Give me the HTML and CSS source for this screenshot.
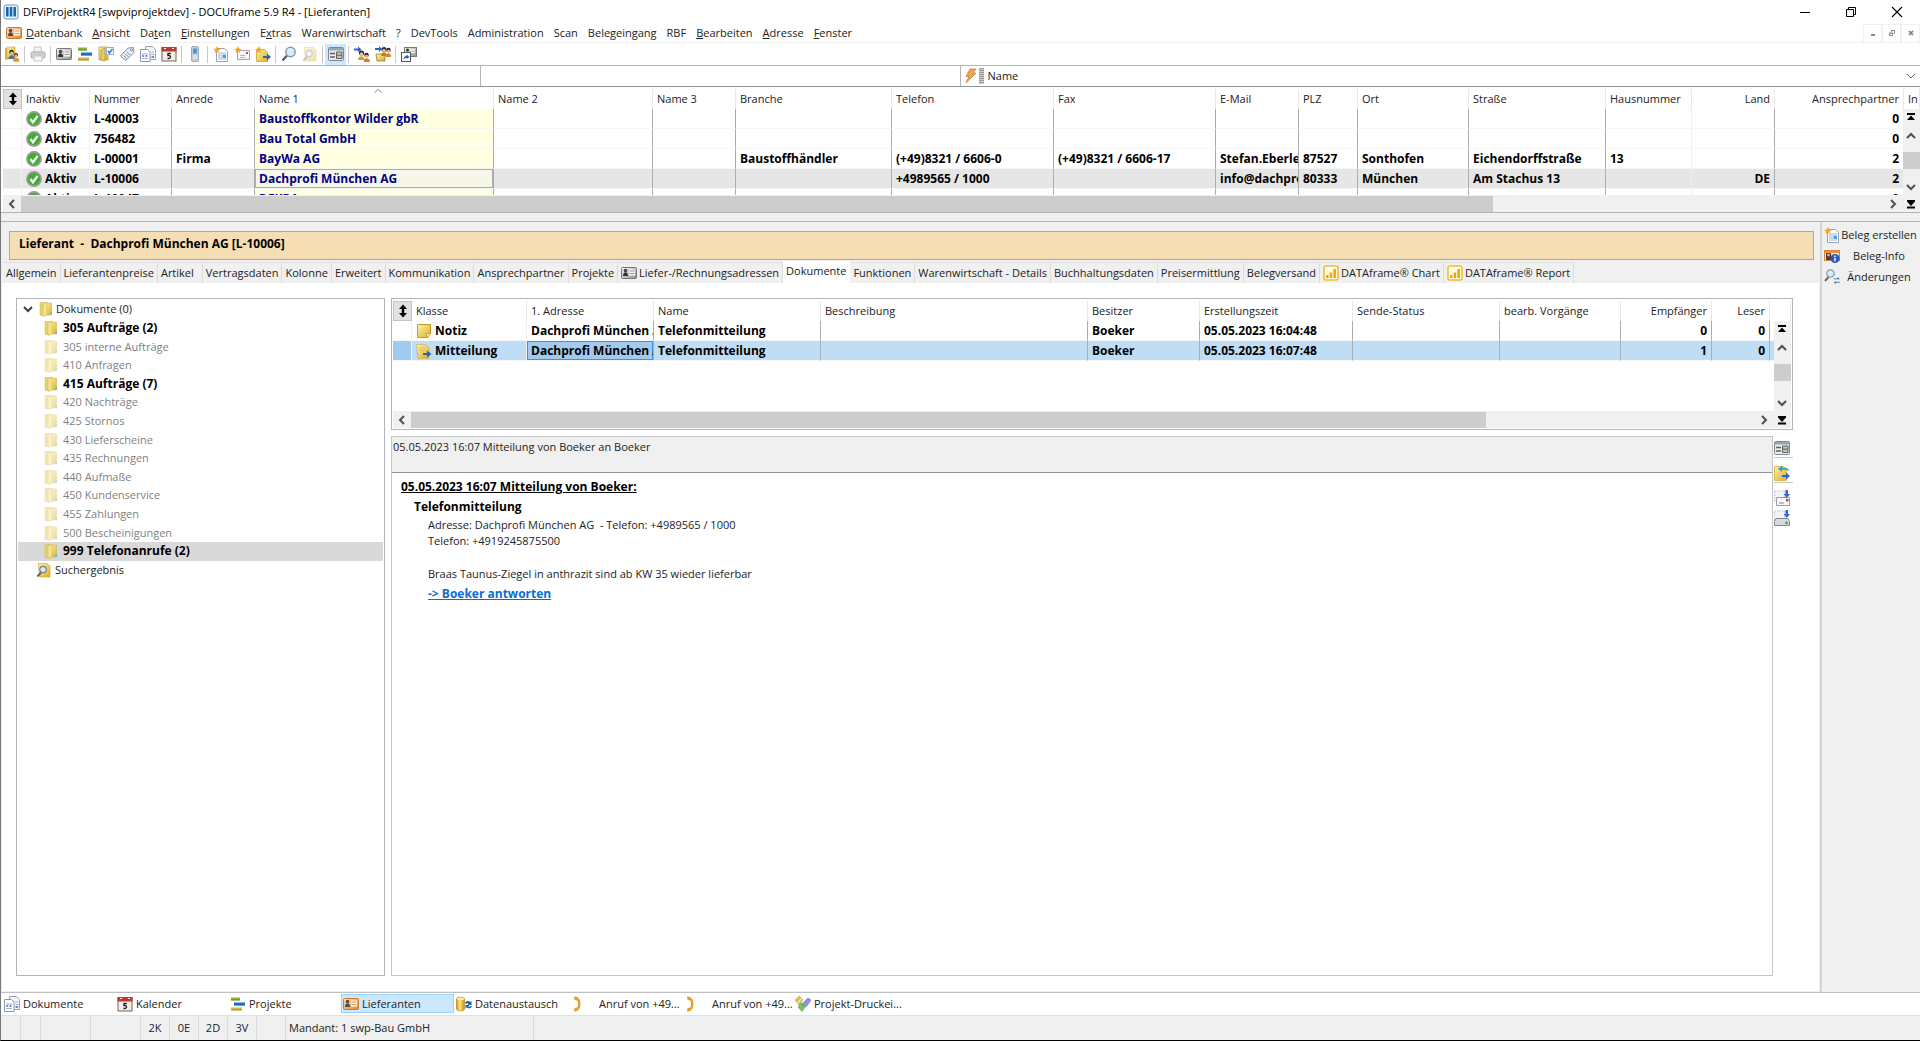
FILE: index.html
```html
<!DOCTYPE html>
<html lang="de">

<head>
    <meta charset="UTF-8">
    <title>DFViProjektR4 [swpviprojektdev] - DOCUframe 5.9 R4 - [Lieferanten]</title>
    <link rel="stylesheet" href="styles.css">
</head>

<body>

    <!-- Icon set -->
    <svg class="sprite" aria-hidden="true">
        <defs>
            <linearGradient id="g-gold" x1="0" y1="0" x2="1" y2="1">
                <stop offset="0" stop-color="#fdf3a8" />
                <stop offset="1" stop-color="#dcae28" />
            </linearGradient>
            <linearGradient id="g-gray" x1="0" y1="0" x2="1" y2="1">
                <stop offset="0" stop-color="#fafafa" />
                <stop offset="1" stop-color="#8e8e8e" />
            </linearGradient>
            <linearGradient id="g-orange" x1="0" y1="0" x2="1" y2="1">
                <stop offset="0" stop-color="#fde2bf" />
                <stop offset="1" stop-color="#e08528" />
            </linearGradient>
            <linearGradient id="g-tube" x1="0" y1="0" x2="1" y2="0">
                <stop offset="0" stop-color="#c98f10" />
                <stop offset=".4" stop-color="#ffe680" />
                <stop offset="1" stop-color="#c98f10" />
            </linearGradient>
        </defs>
        <symbol id="i-app" viewBox="0 0 16 16">
            <rect x="1" y="1" width="14" height="14" rx="2" fill="#e8f3fb" stroke="#5b9bd0" />
            <path d="M3 3h2.6v9.500H3zM6.700 3h2.600v9.500H6.700zM10.400 3H13v9.500h-2.600z" fill="#1b66ab" />
        </symbol>
        <symbol id="i-card" viewBox="0 0 16 16">
            <rect x=".5" y="2.500" width="15" height="11" rx="1" fill="url(#g-orange)" stroke="#cf7a2c" />
            <rect x="8" y="4.500" width="6" height="6" fill="#fff4e6" />
            <path d="M8.500 6h5M8.500 8.500h5" stroke="#d79b62" />
            <circle cx="4.500" cy="5.500" r="1.800" fill="#6a4a34" />
            <path d="M2 11c0-5 5-5 5 0z" fill="#4b4b52" />
        </symbol>
        <symbol id="i-card-gray" viewBox="0 0 16 16">
            <rect x=".5" y="2.500" width="15" height="11" rx="1" fill="url(#g-gray)" stroke="#777" />
            <rect x="8" y="4.500" width="6" height="6" fill="#f4f4f4" />
            <path d="M8.500 6h5M8.500 8.500h5" stroke="#999" />
            <circle cx="4.500" cy="5.500" r="1.800" fill="#444" />
            <path d="M2 11c0-5 5-5 5 0z" fill="#333" />
        </symbol>
        <symbol id="i-contacts" viewBox="0 0 16 16">
            <path d="M1 2l6-1v12l-6 1z" fill="#d9b93c" />
            <path d="M3 1h8v11H3z" fill="url(#g-gold)" stroke="#c9a63a" stroke-width=".6" />
            <circle cx="7.500" cy="6" r="2.300" fill="#3a2a20" />
            <circle cx="7.700" cy="7" r="1.600" fill="#eebd8c" />
            <path d="M4.500 13c0-5 6-5 6 0z" fill="#3d6fb5" />
            <circle cx="12" cy="9" r="2" fill="#2b211b" />
            <circle cx="12" cy="9.800" r="1.500" fill="#e8b17c" />
            <path d="M9 15.500c0-5 6.500-5 6.500 0z" fill="#e08a2c" />
        </symbol>
        <symbol id="i-printer" viewBox="0 0 16 16">
            <path d="M4 1h7l1 5H4z" fill="#f4f4f4" stroke="#c4c4c4" />
            <rect x="1" y="6" width="14" height="6" rx="1" fill="#cfcfcf" stroke="#b5b5b5" />
            <path d="M4 10h8v5H4z" fill="#f7f7f7" stroke="#c4c4c4" />
        </symbol>
        <symbol id="i-gantt" viewBox="0 0 16 16">
            <path d="M1 1.500h9v3H1z" fill="#86b92c" />
            <path d="M4 6.500h11v3H4z" fill="#1c78c8" />
            <path d="M1 11.500h11v3H1z" fill="#dfb445" />
            <path d="M1 4h9M4 9h11M1 14h11" stroke="#0004" />
        </symbol>
        <symbol id="i-catalog" viewBox="0 0 16 16">
            <path d="M1 1h9v13H1z" fill="url(#g-gold)" stroke="#b9952d" stroke-width=".7" />
            <path d="M3 4l4-2v13l-4-1z" fill="#e6cc68" stroke="#a8872b" stroke-width=".6" />
            <rect x="8.500" y="1.500" width="7" height="7" fill="#f5f9fd" stroke="#9fb2c4" />
            <path d="M10 5l1.500 2L14.500 3" fill="none" stroke="#2e7fc2" stroke-width="1.400" />
        </symbol>
        <symbol id="i-tag" viewBox="0 0 16 16">
            <path d="M1.500 10L9 2l5.500-.5.500 5L7 14.500z" fill="#e6edf2" stroke="#8397a6" />
            <circle cx="12.500" cy="4" r="1.100" fill="#fff" stroke="#6c8294" stroke-width=".8" />
            <path d="M4.500 9.500l3 3M6.200 7.700l3 3M8 6l3 3" stroke="#7d92a3" />
        </symbol>
        <symbol id="i-docs" viewBox="0 0 16 16">
            <path d="M5.500.5h7l3 3v10h-10z" fill="#f3f6f9" stroke="#98a4b0" />
            <path d="M.5 3.500h7l2.500 2.500v9.500H.5z" fill="#fff" stroke="#8d99a5" />
            <path d="M2 8h6M2 12.500h6M11.500 6H14M11.500 8.500H14" stroke="#9db5cf" />
            <path d="M2.200 10h2M5.500 10h2M11.500 11H14" stroke="#5b5bd0" stroke-width="1.500" />
        </symbol>
        <symbol id="i-calendar" viewBox="0 0 16 16">
            <rect x="1" y="1.500" width="14" height="13.500" fill="#f2ede8" stroke="#7b6152" />
            <path d="M.5 1h15v4.500H.5z" fill="#bf3a2e" />
            <path d="M3 2.500h2M11 2.500h2" stroke="#fff" />
            <path d="M9.800 7.500H7v2c2.800-.6 3.400 2.900.8 3H6.500" fill="none" stroke="#222" stroke-width="1.400" />
        </symbol>
        <symbol id="i-mobile" viewBox="0 0 16 16">
            <rect x="4.500" y=".5" width="7" height="15" rx="1.500" fill="#c9ced4" stroke="#a2a9b1" />
            <path d="M6 2.500h4v5H6z" fill="#3f9ae0" />
            <path d="M6 10h4M6 12h4" stroke="#f5f5f5" />
        </symbol>
        <symbol id="i-new-doc" viewBox="0 0 16 16">
            <path d="M3.500 2.500h8l3 3v10h-11z" fill="#fff" stroke="#98a4b0" />
            <path d="M5 7h8M5 9h4M5 11h4M5 13h8" stroke="#9db5cf" />
            <path d="M9.500 8.500H13V12H9.500z" fill="#4fa0d8" />
            <path d="M4 0l1 2.500L7.500 3 5.500 4.500 6 7 4 5.700 1.500 7l.7-2.600L0 3l2.800-.4z" fill="#f5a623" />
        </symbol>
        <symbol id="i-new-mail" viewBox="0 0 16 16">
            <path d="M3.500 4.500h12v9h-12z" fill="#f7f7f7" stroke="#a5a5a5" />
            <path d="M6 9.500h5M6 11.500h5" stroke="#b5b5b5" />
            <path d="M12 6h2v2h-2z" fill="#d6403a" />
            <path d="M4 0l1 2.500L7.500 3 5.500 4.500 6 7 4 5.700 1.500 7l.7-2.600L0 3l2.800-.4z" fill="#f5a623" />
        </symbol>
        <symbol id="i-new-note" viewBox="0 0 16 16">
            <path d="M1.500 3.500h8l3 3v9h-11z" fill="url(#g-gold)" stroke="#d5b548" />
            <path d="M8 10h4V7.500l4 3.500-4 3.500V12H8z" fill="#2c62c4" />
            <path d="M4 0l1 2.500L7.500 3 5.500 4.500 6 7 4 5.700 1.500 7l.7-2.600L0 3l2.800-.4z" fill="#f5a623" />
        </symbol>
        <symbol id="i-search" viewBox="0 0 16 16">
            <path d="M1.500 14.500L6 9.500" stroke="#5d5d66" stroke-width="2.400" />
            <circle cx="9.500" cy="6" r="4.700" fill="#d5ebfa" stroke="#7d98ae" stroke-width="1.500" />
            <path d="M7 5c.5-1.500 2-2 3.500-1.500" stroke="#fff" fill="none" />
        </symbol>
        <symbol id="i-search-folder" viewBox="0 0 16 16">
            <path d="M2 1.500h9l3 2.500v11H4z" fill="url(#g-gold)" stroke="#d9a83c" stroke-width=".7" />
            <path d="M1.500 14.500L5 10.500" stroke="#666" stroke-width="2" />
            <circle cx="7" cy="7.500" r="3.200" fill="#dfe9f0" stroke="#72808c" stroke-width="1.200" />
        </symbol>
        <symbol id="i-form" viewBox="0 0 16 16">
            <rect x=".5" y="1.500" width="15" height="13" rx="1" fill="#e9ebed" stroke="#7e8890" />
            <path d="M1 2h14v2.500H1z" fill="#9aa6b0" />
            <path d="M2 7.500h5M2 11h5" stroke="#5b6268" stroke-width="1.500" />
            <path d="M8.500 6h5.500v6.500H8.500z" fill="#c9c69a" stroke="#5b6268" />
            <path d="M8.500 9.200H14" stroke="#5b6268" />
        </symbol>
        <symbol id="i-people-to" viewBox="0 0 16 16">
            <path d="M0 2.500h4V.5L7.500 3.500 4 6.500V4.500H0z" fill="#2c62c4" />
            <circle cx="7.500" cy="7" r="2.500" fill="#2b211b" />
            <circle cx="7.500" cy="8" r="1.700" fill="#eebd8c" />
            <path d="M4 14c0-5 6.500-5 6.500 0z" fill="#caa431" />
            <circle cx="12.500" cy="9" r="2.300" fill="#2b211b" />
            <circle cx="12.500" cy="10" r="1.600" fill="#e8b17c" />
            <path d="M9.500 16c0-5 6.500-5 6.500 0z" fill="#dd7b30" />
        </symbol>
        <symbol id="i-people-folder" viewBox="0 0 16 16">
            <path d="M1 8h6l3 2v5H2z" fill="url(#g-gold)" stroke="#8a7420" stroke-width=".7" />
            <path d="M0 2h4V0l3 3-3 3V4H0z" fill="#2c62c4" />
            <circle cx="9" cy="3.500" r="2.500" fill="#2b211b" />
            <circle cx="9" cy="4.500" r="1.700" fill="#eebd8c" />
            <path d="M6 10c0-5 6-5 6 0z" fill="#b7852b" />
            <circle cx="13.500" cy="4" r="2.200" fill="#2b211b" />
            <circle cx="13.500" cy="5" r="1.500" fill="#e8b17c" />
            <path d="M11 11c0-5 5-5 5 0z" fill="#dd7b30" />
        </symbol>
        <symbol id="i-shortcut" viewBox="0 0 16 16">
            <rect x="3.500" y="1.500" width="12" height="9" fill="url(#g-gray)" stroke="#777" />
            <path d="M9 4h5M9 6.500h5" stroke="#fff" />
            <circle cx="6.500" cy="4" r="1.500" fill="#333" />
            <rect x=".5" y="6.500" width="9" height="9" fill="#fff" stroke="#555" />
            <path d="M2.500 14c0-3 1-4 3-4V8.500L8.500 11 5.500 13v-1.500c-1.500 0-2 1-3 2.500z" fill="#1d56b0" />
        </symbol>
        <symbol id="i-bolt" viewBox="0 0 16 16">
            <path d="M7 1h6l-3 4h3L3 15l3-6.500H3z" fill="#f0a552" stroke="#b9793a" stroke-width=".7" />
        </symbol>
        <symbol id="i-ok" viewBox="0 0 16 16">
            <circle cx="8" cy="8" r="7" fill="#3fae2f" stroke="#999" stroke-width="1.800" />
            <path d="M4.500 8l2.500 3.300L11.500 5" fill="none" stroke="#fff" stroke-width="2.200" />
        </symbol>
        <symbol id="i-folder" viewBox="0 0 16 16">
            <path d="M2 1.500h6V14l-6 .5z" fill="#e9d36b" stroke="#cdb24a" stroke-width=".5" />
            <path d="M7.500 2h6v12h-6z" fill="url(#g-gold)" stroke="#cdb24a" stroke-width=".5" />
            <path d="M5 3l4-2v13l-4 1.500z" fill="#f5e590" stroke="#c9ac3f" stroke-width=".5" />
            <path d="M12.500 11h1.500v3h-1.500z" fill="#7db4c8" />
        </symbol>
        <symbol id="i-note" viewBox="0 0 16 16">
            <path d="M1.500 1.500h13v9l-3 4h-10z" fill="url(#g-gold)" stroke="#c39a2a" />
            <path d="M14.500 10.500h-4l1 4z" fill="#fff5bd" stroke="#b08a25" stroke-width=".6" />
        </symbol>
        <symbol id="i-message" viewBox="0 0 16 16">
            <path d="M.5 1.500H10l3 3v11H2z" fill="url(#g-gold)" stroke="#ceb455" stroke-width=".8" />
            <path d="M3 5h6M3 7.500h6" stroke="#d9c067" />
            <path d="M7 10h4V7.500l4.500 3.500L11 14.500V12H7z" fill="#2c62c4" />
        </symbol>
        <symbol id="i-chart" viewBox="0 0 16 16">
            <rect x="1" y="1" width="14" height="14" rx="2" fill="#fffbe8" stroke="#f0c030" stroke-width="1.600" />
            <path d="M3 10h2.500v3H3zM6.700 7.500h2.500V13H6.700zM10.400 4h2.500v9h-2.500z" fill="#e9a800" />
        </symbol>
        <symbol id="i-sync" viewBox="0 0 16 16">
            <path d="M.5 3c0-2.500 8-2.500 8 0v10c0 2.500-8 2.500-8 0z" fill="url(#g-tube)" stroke="#b07f12" stroke-width=".6" />
            <ellipse cx="4.500" cy="3" rx="3.500" ry="1.300" fill="#fff0a8" />
            <path d="M9 7c1-2.500 4-2.500 5-1l1.500-1v4h-4l1.200-1.200C12 7 10.500 7 10 8zM16 10c-1 2.800-4 2.800-5.200 1.300L9.500 12.500V9h4l-1.400 1.200c.9.800 1.900.8 2.400-.2z" fill="#1f5cae" />
        </symbol>
        <symbol id="i-call" viewBox="0 0 16 16">
            <path d="M6.500 2c5 1 5 11 0 12" fill="none" stroke="#e3a02d" stroke-width="2.400" />
            <path d="M5 .5l3.500.5v3.500L5.500 4zM5 15.500l3.500-.5v-3.500l-3 .5z" fill="#e3a02d" />
        </symbol>
        <symbol id="i-stamps" viewBox="0 0 16 16">
            <path d="M0 4l4-4 4 4-4 5z" fill="#d6c65a" stroke="#a5963b" stroke-width=".5" />
            <path d="M7 8l6-6 3 2-5 7z" fill="#8a94ea" stroke="#4d57b4" stroke-width=".5" />
            <path d="M3 11l3-4 4 4-3 4.500z" fill="#7fc25e" stroke="#4c8a35" stroke-width=".5" />
            <path d="M3 7l3-4" stroke="#fff" />
        </symbol>
        <symbol id="i-info" viewBox="0 0 16 16">
            <rect x=".5" y="2.500" width="15" height="10" fill="#f6e6d4" stroke="#d8823a" />
            <path d="M1 3h14v2H1z" fill="#e9923f" />
            <path d="M2 5h5v7H2z" fill="#4a3b35" />
            <circle cx="4.500" cy="7" r="1.400" fill="#d8b492" />
            <circle cx="11" cy="10.500" r="4.500" fill="#2b56c9" />
            <path d="M11 7.500v1.400M11 9.800v3.500" stroke="#fff" stroke-width="1.500" />
        </symbol>
        <symbol id="i-changes" viewBox="0 0 16 16">
            <path d="M1 12l3.500-4" stroke="#6d6d76" stroke-width="2" />
            <circle cx="6.500" cy="4.500" r="3.700" fill="#d5ebfa" stroke="#8199ac" stroke-width="1.200" />
            <path d="M9.500 9.500h4V8l2.500 2.300H9.500zM16 13.500h-4V15l-2.500-2.300H16z" fill="#33658f" />
        </symbol>
        <symbol id="i-reply" viewBox="0 0 16 16">
            <path d="M.5 1.500h9l3 3v11H.5z" fill="url(#g-gold)" stroke="#d9be56" />
            <path d="M4 4l4-3.500v2c4-.5 7 1 7.500 4-2-1.800-4-2-7.500-1.500v2z" fill="#35a3cf" />
            <path d="M8 10h4V7.500l4 3.500-4 3.500V12H8z" fill="#2c62c4" />
        </symbol>
        <symbol id="i-mail-down" viewBox="0 0 16 16">
            <path d="M.5 1h10v10H.5z" fill="#f2f4f6" stroke="#b9bfc5" stroke-dasharray="1.500 1" />
            <path d="M2.500 7.500h13v8h-13z" fill="#f7f7f7" stroke="#9d9d9d" />
            <path d="M5 13h5" stroke="#888" />
            <path d="M12 9h2.500v2.500H12z" fill="#d6403a" />
            <path d="M11.500 0h2.500v4h2l-3.200 4L9.500 4h2z" fill="#3568d4" />
        </symbol>
        <symbol id="i-drive-down" viewBox="0 0 16 16">
            <path d="M.5 1h10v10H.5z" fill="#f2f4f6" stroke="#b9bfc5" stroke-dasharray="1.500 1" />
            <path d="M2 8.500h12l1.500 3v4H.5v-4z" fill="#d7d9dc" stroke="#85898d" />
            <circle cx="12.500" cy="13" r="1.400" fill="#3fae2f" />
            <path d="M11.500 0h2.500v4h2l-3.200 4L9.500 4h2z" fill="#3568d4" />
        </symbol>
        <symbol id="i-fit" viewBox="0 0 16 16">
            <path d="M8 1.500l4 4.500H9.200v4H12l-4 4.500L4 10h2.800V6H4z" fill="#000" />
        </symbol>
        <symbol id="i-left" viewBox="0 0 16 16">
            <path d="M10 4L6 8l4 4" fill="none" stroke="#505050" stroke-width="2" />
        </symbol>
        <symbol id="i-right" viewBox="0 0 16 16">
            <path d="M6 4l4 4-4 4" fill="none" stroke="#505050" stroke-width="2" />
        </symbol>
        <symbol id="i-up" viewBox="0 0 16 16">
            <path d="M4 10l4-4 4 4" fill="none" stroke="#505050" stroke-width="2" />
        </symbol>
        <symbol id="i-down" viewBox="0 0 16 16">
            <path d="M4 6l4 4 4-4" fill="none" stroke="#505050" stroke-width="2" />
        </symbol>
        <symbol id="i-first" viewBox="0 0 16 16">
            <path d="M4 4h8v2H4zM8 6.500l4 4.500H4z" fill="#000" />
        </symbol>
        <symbol id="i-last" viewBox="0 0 16 16">
            <path d="M4 10.500h8v2H4zM8 10L4 5.500V4h8v1.500z" fill="#000" />
        </symbol>
        <symbol id="i-min" viewBox="0 0 16 16">
            <path d="M3 8.500h10" stroke="#000" />
        </symbol>
        <symbol id="i-restore" viewBox="0 0 16 16">
            <path d="M3.500 5.500h7v7h-7zM5.500 5.500v-2h7v7h-2" fill="none" stroke="#000" />
        </symbol>
        <symbol id="i-close" viewBox="0 0 16 16">
            <path d="M3 3l10 10M13 3L3 13" stroke="#000" stroke-width="1.200" />
        </symbol>
        <symbol id="i-mdi-min" viewBox="0 0 16 16">
            <path d="M6 10h4" stroke="#7d8fa3" stroke-width="2" />
        </symbol>
        <symbol id="i-mdi-restore" viewBox="0 0 16 16">
            <path d="M5.500 8.500h3v2h-3zM7.500 7V5.500h3v3H9.500M5 8h4M7 5.500h4" fill="none" stroke="#7d8fa3" />
        </symbol>
        <symbol id="i-mdi-close" viewBox="0 0 16 16">
            <path d="M6 6l4 4M10 6l-4 4" stroke="#6d7f93" stroke-width="1.700" />
        </symbol>
    </svg>

    <header class="title-bar">
        <svg class="icon"><use href="#i-app" /></svg>
        <h1>DFViProjektR4 [swpviprojektdev] - DOCUframe 5.9 R4 - [Lieferanten]</h1>
        <div class="window-buttons">
            <button aria-label="Minimieren"><svg class="icon"><use href="#i-min" /></svg></button>
            <button aria-label="Wiederherstellen"><svg class="icon"><use href="#i-restore" /></svg></button>
            <button aria-label="Schließen"><svg class="icon"><use href="#i-close" /></svg></button>
        </div>
    </header>

    <nav class="menu-bar">
        <svg class="icon"><use href="#i-card" /></svg>
        <button><u>D</u>atenbank</button>
        <button><u>A</u>nsicht</button>
        <button>Da<u>t</u>en</button>
        <button><u>E</u>instellungen</button>
        <button>E<u>x</u>tras</button>
        <button>Warenwirtschaft</button>
        <button>?</button>
        <button>DevTools</button>
        <button>Administration</button>
        <button>Scan</button>
        <button>Belegeingang</button>
        <button>RBF</button>
        <button><u>B</u>earbeiten</button>
        <button><u>A</u>dresse</button>
        <button><u>F</u>enster</button>
        <div class="mdi-buttons">
            <button aria-label="Fenster minimieren"><svg class="icon"><use href="#i-mdi-min" /></svg></button>
            <button aria-label="Fenster wiederherstellen"><svg class="icon"><use href="#i-mdi-restore" /></svg></button>
            <button aria-label="Fenster schließen"><svg class="icon"><use href="#i-mdi-close" /></svg></button>
        </div>
    </nav>

    <div class="toolbar">
        <button aria-label="Kontakte"><svg class="icon"><use href="#i-contacts" /></svg></button>
        <i class="sep"></i>
        <button aria-label="Drucken" disabled><svg class="icon"><use href="#i-printer" /></svg></button>
        <i class="sep"></i>
        <button aria-label="Adressen"><svg class="icon"><use href="#i-card-gray" /></svg></button>
        <button aria-label="Projekte"><svg class="icon"><use href="#i-gantt" /></svg></button>
        <button aria-label="Katalog"><svg class="icon"><use href="#i-catalog" /></svg></button>
        <button aria-label="Artikel"><svg class="icon"><use href="#i-tag" /></svg></button>
        <button aria-label="Dokumente"><svg class="icon"><use href="#i-docs" /></svg></button>
        <button aria-label="Kalender"><svg class="icon"><use href="#i-calendar" /></svg></button>
        <i class="sep"></i>
        <button aria-label="Telefon"><svg class="icon"><use href="#i-mobile" /></svg></button>
        <i class="sep"></i>
        <button aria-label="Neues Dokument"><svg class="icon"><use href="#i-new-doc" /></svg></button>
        <button aria-label="Neue E-Mail"><svg class="icon"><use href="#i-new-mail" /></svg></button>
        <button aria-label="Neue Mitteilung"><svg class="icon"><use href="#i-new-note" /></svg></button>
        <i class="sep"></i>
        <button aria-label="Suchen"><svg class="icon"><use href="#i-search" /></svg></button>
        <button aria-label="Suchergebnis" disabled><svg class="icon dim"><use href="#i-search-folder" /></svg></button>
        <i class="sep"></i>
        <button class="active" aria-label="Formularansicht"><svg class="icon"><use href="#i-form" /></svg></button>
        <i class="sep"></i>
        <button aria-label="Weiterleiten"><svg class="icon"><use href="#i-people-to" /></svg></button>
        <button aria-label="Zuordnen"><svg class="icon"><use href="#i-people-folder" /></svg></button>
        <i class="sep"></i>
        <button aria-label="Verknüpfung"><svg class="icon"><use href="#i-shortcut" /></svg></button>
    </div>

    <div class="filter-bar">
        <input type="text" aria-label="Filter">
        <input type="text" aria-label="Suchbegriff">
        <div class="sort-box">
            <svg class="icon"><use href="#i-bolt" /></svg>
            <span class="grip"></span>
            <select aria-label="Sortierung">
                <option>Name</option>
            </select>
            <svg class="arrow" viewBox="0 0 16 16"><path d="M4 6l4 4 4-4" /></svg>
        </div>
    </div>

    <section class="supplier-list">
        <div class="list-area">
            <table class="grid suppliers">
                <colgroup>
                    <col class="w-handle"><col class="w-inaktiv"><col class="w-nummer"><col class="w-short">
                    <col class="w-name1"><col class="w-name2"><col class="w-short"><col class="w-branche">
                    <col class="w-phone"><col class="w-phone"><col class="w-short"><col class="w-plz">
                    <col class="w-ort"><col class="w-strasse"><col class="w-haus"><col class="w-short">
                    <col class="w-partner"><col>
                </colgroup>
                <thead>
                    <tr>
                        <th class="fit"><button aria-label="Spalten anpassen"><svg class="icon"><use href="#i-fit" /></svg></button></th>
                        <th>Inaktiv</th>
                        <th>Nummer</th>
                        <th>Anrede</th>
                        <th class="sorted">Name 1<svg class="caret" viewBox="0 0 8 4"><path d="M.5 3.500L4 .5l3.500 3" /></svg></th>
                        <th>Name 2</th>
                        <th>Name 3</th>
                        <th>Branche</th>
                        <th>Telefon</th>
                        <th>Fax</th>
                        <th>E-Mail</th>
                        <th>PLZ</th>
                        <th>Ort</th>
                        <th>Straße</th>
                        <th>Hausnummer</th>
                        <th class="num">Land</th>
                        <th class="num">Ansprechpartner</th>
                        <th>In</th>
                    </tr>
                </thead>
                <tbody>
                    <tr>
                        <td></td>
                        <td class="soft"><svg class="icon"><use href="#i-ok" /></svg>Aktiv</td>
                        <td>L-40003</td>
                        <td></td>
                        <td class="name1">Baustoffkontor Wilder gbR</td>
                        <td></td><td></td><td></td><td></td><td></td><td></td><td></td><td></td><td></td>
                        <td class="soft"></td>
                        <td></td>
                        <td class="num">0</td>
                        <td></td>
                    </tr>
                    <tr>
                        <td></td>
                        <td class="soft"><svg class="icon"><use href="#i-ok" /></svg>Aktiv</td>
                        <td>756482</td>
                        <td></td>
                        <td class="name1">Bau Total GmbH</td>
                        <td></td><td></td><td></td><td></td><td></td><td></td><td></td><td></td><td></td>
                        <td class="soft"></td>
                        <td></td>
                        <td class="num">0</td>
                        <td></td>
                    </tr>
                    <tr>
                        <td></td>
                        <td class="soft"><svg class="icon"><use href="#i-ok" /></svg>Aktiv</td>
                        <td>L-00001</td>
                        <td>Firma</td>
                        <td class="name1">BayWa AG</td>
                        <td></td>
                        <td></td>
                        <td>Baustoffhändler</td>
                        <td>(+49)8321 / 6606-0</td>
                        <td>(+49)8321 / 6606-17</td>
                        <td>Stefan.Eberle</td>
                        <td>87527</td>
                        <td>Sonthofen</td>
                        <td>Eichendorffstraße</td>
                        <td class="soft">13</td>
                        <td></td>
                        <td class="num">2</td>
                        <td></td>
                    </tr>
                    <tr class="selected">
                        <td></td>
                        <td class="soft"><svg class="icon"><use href="#i-ok" /></svg>Aktiv</td>
                        <td>L-10006</td>
                        <td></td>
                        <td class="name1">Dachprofi München AG</td>
                        <td></td>
                        <td></td>
                        <td></td>
                        <td>+4989565 / 1000</td>
                        <td></td>
                        <td>info@dachpro</td>
                        <td>80333</td>
                        <td>München</td>
                        <td>Am Stachus 13</td>
                        <td class="soft"></td>
                        <td class="num">DE</td>
                        <td class="num">2</td>
                        <td></td>
                    </tr>
                    <tr>
                        <td></td>
                        <td class="soft"><svg class="icon"><use href="#i-ok" /></svg>Aktiv</td>
                        <td>L-10047</td>
                        <td></td>
                        <td class="name1">DEKRA</td>
                        <td></td><td></td><td></td><td></td><td></td><td></td><td></td><td></td><td></td>
                        <td class="soft"></td>
                        <td></td>
                        <td class="num">0</td>
                        <td></td>
                    </tr>
                </tbody>
            </table>
            <div class="v-scroll">
                <button aria-label="Zum Anfang"><svg class="icon"><use href="#i-first" /></svg></button>
                <button aria-label="Nach oben"><svg class="icon"><use href="#i-up" /></svg></button>
                <span class="thumb"></span>
                <button aria-label="Nach unten"><svg class="icon"><use href="#i-down" /></svg></button>
            </div>
        </div>
        <div class="h-scroll">
            <button aria-label="Nach links"><svg class="icon"><use href="#i-left" /></svg></button>
            <span class="track"><span class="thumb suppliers-thumb"></span></span>
            <button aria-label="Nach rechts"><svg class="icon"><use href="#i-right" /></svg></button>
            <button aria-label="Zum Ende"><svg class="icon"><use href="#i-last" /></svg></button>
        </div>
    </section>

    <div class="main">
        <main class="detail">
            <h2 class="banner">Lieferant&nbsp; -&nbsp; Dachprofi München AG [L-10006]</h2>

            <div class="tabs" role="tablist">
                <button role="tab">Allgemein</button>
                <button role="tab">Lieferantenpreise</button>
                <button role="tab" class="wide">Artikel</button>
                <button role="tab">Vertragsdaten</button>
                <button role="tab">Kolonne</button>
                <button role="tab">Erweitert</button>
                <button role="tab">Kommunikation</button>
                <button role="tab">Ansprechpartner</button>
                <button role="tab">Projekte</button>
                <button role="tab"><svg class="icon"><use href="#i-card-gray" /></svg>Liefer-/Rechnungsadressen</button>
                <button role="tab" class="active" aria-selected="true">Dokumente</button>
                <button role="tab">Funktionen</button>
                <button role="tab">Warenwirtschaft - Details</button>
                <button role="tab">Buchhaltungsdaten</button>
                <button role="tab">Preisermittlung</button>
                <button role="tab">Belegversand</button>
                <button role="tab"><svg class="icon"><use href="#i-chart" /></svg>DATAframe® Chart</button>
                <button role="tab"><svg class="icon"><use href="#i-chart" /></svg>DATAframe® Report</button>
            </div>

            <div class="tab-page">
                <ul class="tree">
                    <li class="root"><svg class="toggle" viewBox="0 0 16 16"><path d="M4 6l4 4 4-4" /></svg><svg class="icon"><use href="#i-folder" /></svg>Dokumente (0)</li>
                    <li class="filled"><svg class="icon"><use href="#i-folder" /></svg>305 Aufträge (2)</li>
                    <li class="empty"><svg class="icon"><use href="#i-folder" /></svg>305 interne Aufträge</li>
                    <li class="empty"><svg class="icon"><use href="#i-folder" /></svg>410 Anfragen</li>
                    <li class="filled"><svg class="icon"><use href="#i-folder" /></svg>415 Aufträge (7)</li>
                    <li class="empty"><svg class="icon"><use href="#i-folder" /></svg>420 Nachträge</li>
                    <li class="empty"><svg class="icon"><use href="#i-folder" /></svg>425 Stornos</li>
                    <li class="empty"><svg class="icon"><use href="#i-folder" /></svg>430 Lieferscheine</li>
                    <li class="empty"><svg class="icon"><use href="#i-folder" /></svg>435 Rechnungen</li>
                    <li class="empty"><svg class="icon"><use href="#i-folder" /></svg>440 Aufmaße</li>
                    <li class="empty"><svg class="icon"><use href="#i-folder" /></svg>450 Kundenservice</li>
                    <li class="empty"><svg class="icon"><use href="#i-folder" /></svg>455 Zahlungen</li>
                    <li class="empty"><svg class="icon"><use href="#i-folder" /></svg>500 Bescheinigungen</li>
                    <li class="filled selected"><svg class="icon"><use href="#i-folder" /></svg>999 Telefonanrufe (2)</li>
                    <li class="result"><svg class="icon"><use href="#i-search-folder" /></svg>Suchergebnis</li>
                </ul>

                <div class="documents">
                    <section class="document-list">
                        <div class="list-area">
                            <table class="grid">
                                <colgroup>
                                    <col class="w-handle"><col class="w-klasse"><col class="w-adresse"><col class="w-name">
                                    <col class="w-beschreibung"><col class="w-besitzer"><col class="w-zeit"><col class="w-status">
                                    <col class="w-vorgaenge"><col class="w-empfaenger"><col class="w-leser"><col>
                                </colgroup>
                                <thead>
                                    <tr>
                                        <th class="fit"><button aria-label="Spalten anpassen"><svg class="icon"><use href="#i-fit" /></svg></button></th>
                                        <th>Klasse</th>
                                        <th>1. Adresse</th>
                                        <th>Name</th>
                                        <th>Beschreibung</th>
                                        <th>Besitzer</th>
                                        <th>Erstellungszeit</th>
                                        <th>Sende-Status</th>
                                        <th>bearb. Vorgänge</th>
                                        <th class="num">Empfänger</th>
                                        <th class="num">Leser</th>
                                        <th></th>
                                    </tr>
                                </thead>
                                <tbody>
                                    <tr>
                                        <td></td>
                                        <td class="soft"><svg class="icon"><use href="#i-note" /></svg>Notiz</td>
                                        <td>Dachprofi München A</td>
                                        <td>Telefonmitteilung</td>
                                        <td></td>
                                        <td>Boeker</td>
                                        <td>05.05.2023 16:04:48</td>
                                        <td></td>
                                        <td></td>
                                        <td class="num">0</td>
                                        <td class="num">0</td>
                                        <td></td>
                                    </tr>
                                    <tr class="current">
                                        <td></td>
                                        <td class="soft"><svg class="icon"><use href="#i-message" /></svg>Mitteilung</td>
                                        <td class="focus">Dachprofi München A</td>
                                        <td>Telefonmitteilung</td>
                                        <td></td>
                                        <td>Boeker</td>
                                        <td>05.05.2023 16:07:48</td>
                                        <td></td>
                                        <td></td>
                                        <td class="num">1</td>
                                        <td class="num">0</td>
                                        <td></td>
                                    </tr>
                                </tbody>
                            </table>
                            <div class="v-scroll">
                                <button aria-label="Zum Anfang"><svg class="icon"><use href="#i-first" /></svg></button>
                                <button aria-label="Nach oben"><svg class="icon"><use href="#i-up" /></svg></button>
                                <span class="thumb"></span>
                                <button aria-label="Nach unten"><svg class="icon"><use href="#i-down" /></svg></button>
                            </div>
                        </div>
                        <div class="h-scroll">
                            <button aria-label="Nach links"><svg class="icon"><use href="#i-left" /></svg></button>
                            <span class="track"><span class="thumb documents-thumb"></span></span>
                            <button aria-label="Nach rechts"><svg class="icon"><use href="#i-right" /></svg></button>
                            <button aria-label="Zum Ende"><svg class="icon"><use href="#i-last" /></svg></button>
                        </div>
                    </section>

                    <div class="preview">
                        <article>
                            <div class="preview-head">05.05.2023 16:07 Mitteilung von Boeker an Boeker</div>
                            <div class="preview-body">
                                <h3>05.05.2023 16:07 Mitteilung von Boeker:</h3>
                                <h4>Telefonmitteilung</h4>
                                <p>Adresse: Dachprofi München AG&nbsp; - Telefon: +4989565 / 1000<br>Telefon: +4919245875500</p>
                                <p>Braas Taunus-Ziegel in anthrazit sind ab KW 35 wieder lieferbar</p>
                                <a href="#">-&gt; Boeker antworten</a>
                            </div>
                        </article>
                        <div class="side-tools">
                            <button aria-label="Vorschau"><svg class="icon"><use href="#i-form" /></svg></button>
                            <button aria-label="Antworten"><svg class="icon"><use href="#i-reply" /></svg></button>
                            <button aria-label="Als E-Mail ablegen"><svg class="icon"><use href="#i-mail-down" /></svg></button>
                            <button aria-label="Speichern"><svg class="icon"><use href="#i-drive-down" /></svg></button>
                        </div>
                    </div>
                </div>
            </div>
        </main>

        <aside class="actions">
            <button><svg class="icon"><use href="#i-new-doc" /></svg><span>Beleg erstellen</span></button>
            <button><svg class="icon"><use href="#i-info" /></svg><span>Beleg-Info</span></button>
            <button><svg class="icon"><use href="#i-changes" /></svg><span>Änderungen</span></button>
        </aside>
    </div>

    <nav class="window-bar">
        <button><svg class="icon"><use href="#i-docs" /></svg>Dokumente</button>
        <button><svg class="icon"><use href="#i-calendar" /></svg>Kalender</button>
        <button><svg class="icon"><use href="#i-gantt" /></svg>Projekte</button>
        <button class="active"><svg class="icon"><use href="#i-card" /></svg>Lieferanten</button>
        <button><svg class="icon"><use href="#i-sync" /></svg>Datenaustausch</button>
        <button class="call"><svg class="icon"><use href="#i-call" /></svg>Anruf von +49...</button>
        <button class="call"><svg class="icon"><use href="#i-call" /></svg>Anruf von +49...</button>
        <button><svg class="icon"><use href="#i-stamps" /></svg>Projekt-Druckei...</button>
    </nav>

    <footer class="status-bar">
        <div class="tiny"></div>
        <div class="tiny"></div>
        <div class="medium"></div>
        <div class="medium"></div>
        <div>2K</div>
        <div>0E</div>
        <div>2D</div>
        <div>3V</div>
        <div></div>
        <div class="client">Mandant: 1 swp-Bau GmbH</div>
    </footer>

</body>

</html>
```
FILE: styles.css
```css
* {
    box-sizing: border-box;
}

body {
    margin: 0;
    height: 100vh;
    display: flex;
    flex-direction: column;
    overflow: hidden;
    font-family: "Open Sans", "Noto Sans", sans-serif;
    font-size: 11px;
    line-height: 16px;
    color: #222;
    background: #fff;
    border-left: 1px solid #777;
    border-bottom: 1px solid #000;
}

button {
    font: inherit;
    color: inherit;
    background: none;
    border: none;
    padding: 0;
    margin: 0;
    cursor: pointer;
    white-space: nowrap;
}

h1,
h2,
h3,
h4,
p,
ul {
    margin: 0;
    padding: 0;
}

h2,
h3,
h4 {
    font-size: 12px;
}

.sprite {
    position: absolute;
    width: 0;
    height: 0;
}

.icon {
    width: 16px;
    height: 16px;
    flex: none;
    display: block;
}

.dim {
    opacity: 0.4;
}

/* Title, menu and toolbar */
.title-bar {
    display: flex;
    align-items: center;
    height: 24px;
    flex: none;
    padding: 0 0 0 2px;
    gap: 4px;
    color: #000;
}

.title-bar h1 {
    font-size: 11px;
    font-weight: normal;
}

.window-buttons {
    margin-left: auto;
    display: flex;
}

.window-buttons button {
    width: 46px;
    height: 20px;
    display: grid;
    place-items: center;
}

.menu-bar {
    display: flex;
    align-items: center;
    height: 19px;
    flex: none;
    padding-left: 5px;
    gap: 10px;
    border-bottom: 1px solid #f0f0f0;
}

.menu-bar > .icon {
    margin-right: -6px;
}

.mdi-buttons {
    margin-left: auto;
    display: flex;
}

.mdi-buttons button {
    width: 19px;
    height: 19px;
    border: 1px solid #f0f0f0;
    display: grid;
    place-items: center;
}

.toolbar {
    display: flex;
    align-items: center;
    height: 22px;
    flex: none;
}

.toolbar button {
    width: 21px;
    height: 21px;
    display: grid;
    place-items: center;
}

.toolbar .active {
    background: #cce8ff;
}

.sep {
    width: 1px;
    height: 17px;
    margin: 0 2px;
    background: #c8c8c8;
}

.filter-bar {
    display: grid;
    grid-template-columns: 1fr 1fr 2fr;
    height: 22px;
    flex: none;
    border-top: 1px solid #b4b4b4;
    border-bottom: 1px solid #8c949c;
}

.filter-bar input {
    min-width: 0;
    border: none;
    border-right: 1px solid #b4b4b4;
    font: inherit;
    outline: none;
}

.sort-box {
    display: flex;
    align-items: center;
    padding-left: 2px;
    position: relative;
}

.grip {
    width: 5px;
    height: 16px;
    background: repeating-linear-gradient(#999 0 1px, #ccc 1px 2px);
}

.sort-box select {
    flex: 1;
    appearance: none;
    border: none;
    background: none;
    font: inherit;
    color: inherit;
    padding: 0 4px;
    outline: none;
}

.arrow {
    position: absolute;
    right: 1px;
    width: 16px;
    height: 16px;
    fill: none;
    stroke: #666;
    pointer-events: none;
}

/* Data grids */
.list-area {
    display: flex;
    flex: 1;
    min-height: 0;
    position: relative;
    overflow: hidden;
}

.grid {
    width: 100%;
    height: 0;
    table-layout: fixed;
    border-collapse: separate;
    border-spacing: 0;
}

.grid th,
.grid td {
    height: 20px;
    padding: 0 0 0 4px;
    line-height: 18px;
    text-align: left;
    white-space: nowrap;
    overflow: hidden;
}

.grid th {
    font-weight: normal;
    border-right: 1px solid #e8e8e8;
}

.grid td {
    color: #000;
    font-size: 12px;
    font-weight: bold;
    border-right: 1px solid #acacac;
    border-bottom: 1px solid #f6f6f6;
}

.grid td:first-child,
.grid td:last-child,
.grid .soft {
    border-right-color: #f0f0f0;
}

.grid .num {
    padding-right: 4px;
    text-align: right;
}

.grid .fit {
    padding: 0;
    border: none;
}

.fit button {
    width: 19px;
    height: 20px;
    background: #e1e1e1;
    border: 1px solid #c4c4c4;
    display: grid;
    place-items: center;
}

.grid td .icon {
    display: inline-block;
    vertical-align: top;
    margin: 1px 3px 0 0;
}

.sorted {
    position: relative;
}

.caret {
    position: absolute;
    top: 0;
    left: 50%;
    width: 8px;
    height: 4px;
    fill: none;
    stroke: #888;
}

.grid .name1 {
    color: #000080;
    background: #ffffe1;
}

.selected td {
    background: #e6e6e6;
}

.grid .selected .name1 {
    background: #f6f7e8;
    box-shadow: inset 0 0 0 1px #acacac;
}

.current td {
    background: #bfddf5;
}

.current td:first-child,
.grid .focus {
    background: #a0cbef;
}

.grid .focus {
    box-shadow: inset 0 0 0 1px #3c94de;
}

.w-handle { width: 19px; }
.w-inaktiv { width: 68px; }
.w-nummer { width: 82px; }
.w-short { width: 83px; }
.w-name1 { width: 239px; }
.w-name2 { width: 159px; }
.w-branche { width: 156px; }
.w-phone { width: 162px; }
.w-plz { width: 59px; }
.w-ort { width: 111px; }
.w-strasse { width: 137px; }
.w-haus { width: 86px; }
.w-partner { width: 129px; }
.w-klasse { width: 115px; }
.w-adresse { width: 127px; }
.w-name { width: 167px; }
.w-beschreibung { width: 267px; }
.w-besitzer { width: 112px; }
.w-zeit { width: 153px; }
.w-status { width: 147px; }
.w-vorgaenge { width: 121px; }
.w-empfaenger { width: 91px; }
.w-leser { width: 58px; }

/* The scroll bar lies over the last column, below the header */
.v-scroll {
    position: absolute;
    right: 0;
    top: 20px;
    bottom: 0;
    width: 17px;
    background: #f0f0f0;
    display: flex;
    flex-direction: column;
    gap: 3px;
}

.v-scroll .thumb {
    height: 17px;
    margin-top: 5px;
    background: #cdcdcd;
}

.v-scroll button:last-child {
    margin-top: auto;
}

.h-scroll {
    display: flex;
    align-items: center;
    height: 17px;
    flex: none;
    background: #f0f0f0;
}

.h-scroll button {
    width: 18px;
    height: 16px;
    display: grid;
    place-items: center;
}

.track {
    flex: 1;
    height: 16px;
    display: flex;
}

.h-scroll .thumb {
    background: #cdcdcd;
}

.suppliers-thumb {
    width: 79%;
}

.documents-thumb {
    width: 80%;
}

.supplier-list {
    display: flex;
    flex-direction: column;
    height: 126px;
    flex: none;
    padding: 2px 0 0 2px;
    border-bottom: 1px solid #b4b4b4;
}

/* Detail form */
.main {
    flex: 1;
    min-height: 0;
    display: flex;
    margin-top: 8px;
    border-top: 1px solid #b4b4b4;
    background: #f0f0f0;
    box-shadow: 0 -8px #f0f0f0;
}

.detail {
    flex: 1;
    min-width: 0;
    display: flex;
    flex-direction: column;
    padding: 9px 1px 1px;
    border-right: 2px solid #d4d4d4;
}

.banner {
    height: 29px;
    flex: none;
    margin: 0 5px 1px 7px;
    padding-left: 9px;
    line-height: 24px;
    color: #000;
    background: #f5deb3;
    border: 1px solid #a8a8a8;
}

.tabs {
    display: flex;
    align-items: flex-end;
    height: 22px;
    flex: none;
    padding-left: 1px;
}

.tabs button {
    display: flex;
    align-items: center;
    gap: 2px;
    height: 21px;
    padding: 0 3px;
    border-top: 1px solid #e0e0e0;
    border-right: 1px solid #dcdcdc;
}

.tabs .wide {
    padding-right: 8px;
}

.tabs .active {
    height: 22px;
    padding-bottom: 3px;
    background: #fff;
    border-color: #fff;
}

.tab-page {
    flex: 1;
    min-height: 0;
    display: flex;
    gap: 6px;
    padding: 15px 26px 15px 14px;
    background: #fff;
}

.tree {
    width: 369px;
    flex: none;
    list-style: none;
    display: grid;
    grid-template-rows: repeat(15, 28fr) 594fr;
    padding: 1px;
    border: 1px solid #b0b4bc;
}

.tree li {
    display: flex;
    align-items: center;
    min-height: 0;
    gap: 4px;
    padding-left: 25px;
}

.tree .result {
    padding-left: 18px;
    gap: 3px;
}

.tree .root {
    padding-left: 2px;
    gap: 2px;
}

.toggle {
    width: 16px;
    height: 16px;
    fill: none;
    stroke: #404040;
    stroke-width: 2;
}

.tree .filled {
    color: #000;
    font-size: 12px;
    font-weight: bold;
}

.tree .empty {
    color: #808080;
}

.empty .icon {
    opacity: 0.5;
}

.tree .selected {
    background: #d9d9d9;
}

.documents {
    flex: 1;
    min-width: 0;
    display: flex;
    flex-direction: column;
    gap: 6px;
}

.document-list {
    display: flex;
    flex-direction: column;
    height: 132px;
    flex: none;
    padding: 2px 1px 1px;
    border: 1px solid #b0b4bc;
}

.preview {
    flex: 1;
    min-height: 0;
    display: flex;
    gap: 1px;
}

.preview article {
    flex: 1;
    min-width: 0;
    border: 1px solid #c4c6cc;
}

.preview-head {
    height: 36px;
    padding: 2px 1px;
    background: #f0f0f0;
    border-bottom: 1px solid #8c949c;
}

.preview-body {
    padding: 4px 9px;
}

.preview-body h3,
.preview-body h4 {
    color: #000;
    line-height: 20px;
}

.preview-body h3 {
    text-decoration: underline;
}

.preview-body h4 {
    padding-left: 13px;
}

.preview-body p {
    padding-left: 27px;
    margin-bottom: 17px;
}

.preview-body p + p {
    margin-bottom: 4px;
}

.preview-body a {
    margin-left: 27px;
    color: #0a6cd6;
    font-size: 12px;
    font-weight: bold;
}

.side-tools {
    width: 19px;
    padding-top: 2px;
}

.side-tools button {
    display: block;
    width: 100%;
    height: 20px;
    margin-bottom: 5px;
    border-bottom: 1px solid #c8c8c8;
}

.side-tools button:nth-child(n + 3) {
    border: none;
    margin-bottom: 0;
}

.actions {
    width: 98px;
    flex: none;
    padding: 2px;
}

.actions button {
    display: flex;
    align-items: center;
    width: 100%;
    height: 21px;
}

.actions span {
    flex: 1;
    text-align: center;
}

/* Open windows and status */
.window-bar {
    display: flex;
    height: 24px;
    flex: none;
    padding: 1px 1px 2px;
    border-top: 1px solid #c0c0c0;
    border-bottom: 1px solid #e0e0e0;
}

.window-bar button {
    display: flex;
    align-items: center;
    gap: 3px;
    width: 113px;
    padding-left: 1px;
    border: 1px solid transparent;
}

.window-bar .active {
    background: #cce8ff;
    border-color: #99d1ff;
}

.window-bar .call {
    gap: 14px;
}

.status-bar {
    display: flex;
    height: 24px;
    flex: none;
    background: #f0f0f0;
}

.status-bar div {
    width: 29px;
    line-height: 24px;
    text-align: center;
    border-right: 1px solid #dcdcdc;
}

.status-bar .tiny {
    width: 20px;
}

.status-bar .medium {
    width: 50px;
}

.status-bar .client {
    width: 248px;
    padding-left: 3px;
    text-align: left;
}
```
